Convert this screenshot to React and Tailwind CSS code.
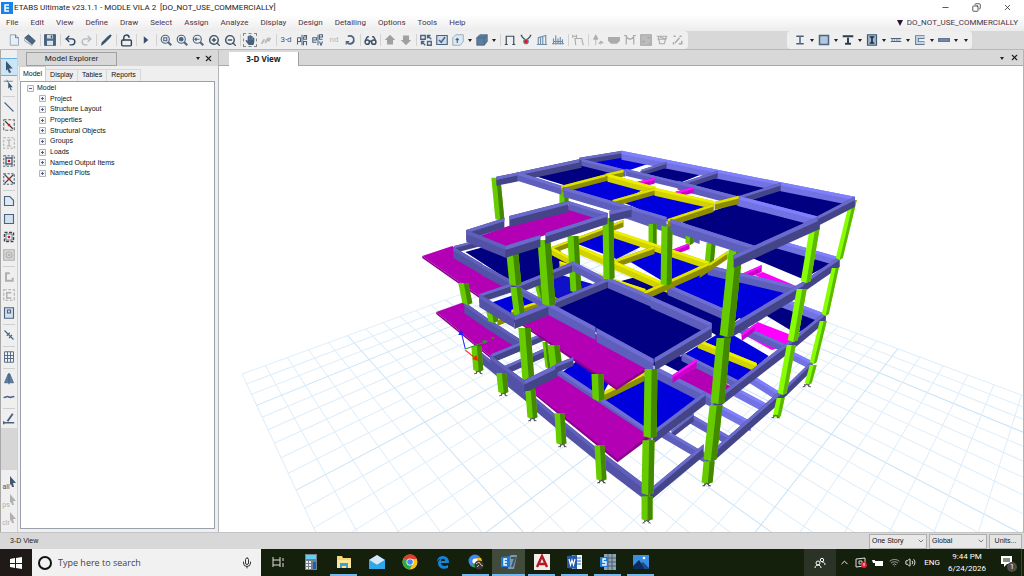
import React, { useState } from 'react'
import {
    Undo2, Redo2, LockOpen, ZoomIn, ZoomOut, Glasses,
    Minus, X, ChevronDown, ChevronUp, Mic, Wifi, Volume2, Copy
} from 'lucide-react'
import { FaHandPaper } from 'react-icons/fa'

const menus = ['File', 'Edit', 'View', 'Define', 'Draw', 'Select', 'Assign', 'Analyze', 'Display', 'Design', 'Detailing', 'Options', 'Tools', 'Help']
const treeItems = ['Project', 'Structure Layout', 'Properties', 'Structural Objects', 'Groups', 'Loads', 'Named Output Items', 'Named Plots']

/* ---------- 3-D model ---------- */

// far left corner of the base grid and its two vanishing points
const L = [243, 374]
const V1 = [90, 46]
const V2 = [1130, 50]
const COLS = 26
const ROWS = 36

function gridPoint(u, v) {
    const a = u * 0.029
    const b = v * 0.027
    const w = 1 - a + b
    return [(L[0] - a * V1[0] + b * V2[0]) / w, (L[1] - a * V1[1] + b * V2[1]) / w]
}

function gridLines() {
    const lines = []
    for (let v = 0; v <= COLS; v++) {
        lines.push([gridPoint(0, v), gridPoint(Math.min(ROWS, 30 + v), v), v % 6 === 5])
    }
    for (let u = 0; u <= ROWS; u++) {
        lines.push([gridPoint(u, u > 30 ? u - 30 : 0), gridPoint(u, COLS), u % 6 === 3])
    }
    return lines
}

// [top face, side face]
const tones = {
    B: ['#8080ff', '#7272e2'],
    D: ['#6e6ed2', '#5e5ebc'],
    E: ['#6060bc', '#5252a6'],
    R: ['#6a6acc', '#444488'],
    Y: ['#eeee00', '#d2d200'],
    Z: ['#e2e200', '#8c8c00'],
    M: ['#ff10ff', '#c800c8'],
    C: ['#66cc00', '#448800'],
    G: ['#88ff00', '#5cb800'],
}

const navy = '#000080'
const blue = '#0000dd'
const mag = '#b400b4'
const magEdge = '#8a008a'

// s = slab [s, fill, points], c = column [c, tone, x1, y1, x2, y2, width], otherwise beam [tone, x1, y1, x2, y2, depth]
const model = [
    // base level
    ['B', 780, 345, 812, 361, 9],
    ['B', 748, 372, 780, 392, 10],
    ['B', 730, 384, 768, 404, 10],
    ['B', 712, 400, 751, 421, 10],
    ['D', 690, 413, 730, 436, 10],
    ['R', 672, 430, 694, 413, 8],
    ['D', 660, 426, 706, 453, 10],
    ['R', 650, 489, 704, 444, 12],
    ['R', 706, 456, 780, 391, 12],
    ['R', 779, 393, 813, 360, 10],
    ['E', 474, 346, 500, 367, 11],
    ['R', 505, 366, 546, 348, 9],
    ['R', 492, 355, 546, 332, 8],
    ['E', 498, 366, 529, 391, 12],
    ['E', 528, 391, 558, 416, 13],
    ['E', 558, 416, 600, 450, 13],
    ['E', 600, 450, 650, 488, 15],
    // first level slabs
    ['s', mag, '437,312 465,302 520,343 492,357'],
    ['s', magEdge, '437,312 492,357 492,359 437,314'],
    ['s', blue, '482,306 520,293 548,306 512,324'],
    ['s', blue, '563,372 580,359 612,378 600,400'],
    ['s', blue, '598,402 658,370 702,396 650,434'],
    ['s', blue, '680,357 725,330 769,356 736,383'],
    ['s', mag, '670,381 697,367 734,388 716,400'],
    ['s', navy, '660,362 676,354 692,363 680,372'],
    ['s', navy, '764,314 782,301 824,316 797,334'],
    ['s', '#ff00ff', '743,334 758,322 794,336 784,347 772,350'],
    ['D', 735, 322, 788, 345, 9],
    ['B', 778, 296, 826, 314, 10],
    ['M', 742, 334, 755, 324, 7],
    ['Y', 698, 339, 757, 363, 9],
    ['D', 682, 352, 738, 380, 9],
    ['D', 657, 367, 712, 395, 12],
    ['M', 673, 375, 697, 359, 8],
    ['Z', 604, 392, 645, 372, 9],
    ['R', 714, 399, 793, 338, 12],
    ['R', 790, 341, 826, 311, 11],
    ['E', 465, 302, 492, 321, 11],
    ['E', 491, 320, 525, 342, 11],
    ['Z', 498, 318, 558, 294, 8],
    // second level slabs
    ['s', navy, '640,300 668,286 740,316 716,334'],
    ['s', navy, '664,302 685,292 742,316 718,336'],
    ['s', blue, '666,286 712,266 794,291 744,320'],
    ['s', navy, '750,257 773,245 836,261 803,279'],
    ['s', navy, '466,252 510,240 560,250 572,268 520,287'],
    ['s', blue, '573,242 607,228 647,244 617,259'],
    ['s', blue, '626,259 654,248 704,264 668,284'],
    ['s', navy, '618,282 640,276 664,288 644,298'],
    ['s', '#1010c8', '552,272 600,286 570,306 545,290'],
    ['s', '#ff00ff', '755,275 763,272 794,285 784,288'],
    ['B', 772, 238, 838, 257, 9],
    ['D', 625, 210, 700, 236, 8],
    ['M', 742, 274, 762, 265, 7],
    ['M', 672, 250, 690, 243, 6],
    ['D', 708, 265, 805, 288, 10],
    ['c', 'C', 649, 224, 649, 245, 8],
    ['c', 'C', 686, 234, 686, 243, 8],
    ['c', 'C', 707, 243, 705, 264, 9],
    ['Z', 552, 247, 624, 220, 7],
    ['Y', 608, 228, 710, 262, 8],
    ['Z', 612, 261, 655, 246, 8],
    ['Y', 576, 244, 668, 284, 9],
    ['Y', 552, 247, 580, 262, 8],
    ['Y', 560, 261, 646, 289, 7],
    ['D', 668, 284, 725, 309, 11],
    ['R', 724, 329, 806, 280, 13],
    ['R', 804, 281, 840, 256, 11],
    ['Z', 700, 270, 728, 251, 8],
    ['Z', 641, 293, 710, 262, 9],
    // left wing
    ['s', mag, '423,256 453,246 515,286 480,296'],
    ['s', magEdge, '423,256 480,296 480,298 423,258'],
    ['R', 455, 246, 490, 237, 7],
    ['c', 'C', 459, 283, 463, 303, 10],
    ['E', 454, 247, 483, 264, 11],
    ['E', 482, 264, 519, 284, 11],
    ['c', 'C', 568, 236, 571, 291, 11],
    ['c', 'C', 535, 284, 540, 302, 6],
    ['R', 518, 284, 573, 262, 10],
    ['D', 573, 261, 604, 277, 10],
    // balcony frame
    ['c', 'C', 486, 307, 489, 321, 10],
    ['s', blue, '498,305 525,292 551,303 516,318'],
    ['Z', 512, 310, 545, 299, 7],
    ['D', 520, 287, 550, 303, 8],
    ['R', 480, 294, 516, 282, 9],
    ['c', 'C', 511, 287, 515, 318, 11],
    ['E', 480, 294, 515, 315, 13],
    ['s', navy, '556,306 608,282 654,298 716,326 655,366 598,333'],
    ['D', 608, 277, 652, 296, 11],
    ['D', 651, 296, 712, 323, 12],
    ['s', mag, '522,323 549,307 652,366 617,389'],
    ['s', magEdge, '522,323 617,387 650,366 650,369 617,390 522,325'],
    ['R', 515, 316, 550, 302, 13],
    ['R', 550, 302, 608, 278, 10],
    ['D', 549, 302, 596, 327, 13],
    ['D', 597, 328, 654, 359, 14],
    ['R', 655, 358, 712, 324, 13],
    // lower balcony
    ['c', 'C', 543, 342, 546, 367, 5],
    ['c', 'C', 548, 345, 551, 368, 12],
    ['D', 556, 366, 598, 394, 12],
    ['D', 597, 394, 652, 431, 13],
    ['c', 'C', 592, 374, 593, 399, 12],
    ['s', mag, '528,387 556,374 650,436 618,461'],
    ['s', magEdge, '528,387 618,459 650,434 650,438 618,462 528,389'],
    ['R', 492, 354, 524, 341, 9],
    ['c', 'C', 519, 328, 524, 393, 12],
    ['E', 491, 355, 526, 381, 13],
    ['R', 525, 380, 558, 364, 13],
    ['R', 556, 364, 574, 357, 9],
    ['R', 653, 431, 706, 391, 13],
    // columns down to the supports
    ['c', 'C', 472, 346, 474, 370, 10],
    ['c', 'C', 497, 373, 499, 392, 10],
    ['c', 'C', 526, 391, 528, 417, 10],
    ['c', 'C', 555, 413, 557, 443, 10],
    ['c', 'C', 595, 445, 597, 479, 10],
    ['c', 'C', 645, 369, 644, 436, 13],
    ['c', 'C', 643, 440, 642, 493, 12],
    ['c', 'C', 642, 496, 642, 519, 11],
    ['c', 'G', 810, 228, 801, 281, 10],
    ['c', 'G', 797, 289, 788, 340, 10],
    ['c', 'G', 787, 345, 778, 393, 9],
    ['c', 'G', 777, 398, 773, 416, 8],
    ['c', 'G', 850, 200, 836, 258, 7],
    ['c', 'G', 832, 268, 822, 314, 7],
    ['c', 'G', 820, 321, 810, 362, 7],
    ['c', 'G', 810, 365, 805, 383, 7],
    ['c', 'C', 603, 218, 604, 278, 11],
    ['c', 'C', 662, 224, 661, 284, 11],
    ['c', 'C', 729, 250, 720, 335, 14],
    ['c', 'C', 717, 338, 711, 402, 14],
    ['c', 'C', 710, 405, 704, 459, 13],
    ['c', 'C', 704, 461, 702, 482, 11],
    // roof level
    ['c', 'C', 492, 178, 496, 219, 9],
    ['c', 'C', 560, 190, 560, 204, 9],
    ['s', navy, '528,174 583,161 616,172 570,187'],
    ['s', blue, '592,163 624,155 652,163 625,172'],
    ['s', navy, '640,172 667,164 706,173 678,184'],
    ['s', navy, '686,183 717,175 770,188 740,199'],
    ['s', navy, '746,198 777,188 848,203 817,220'],
    ['s', blue, '570,190 607,179 644,190 615,204'],
    ['s', blue, '625,203 660,192 710,206 672,223'],
    ['s', navy, '682,222 742,201 820,220 750,254'],
    ['R', 497, 177, 582, 159, 9],
    ['R', 580, 158, 623, 151, 7],
    ['B', 622, 151, 855, 197, 9],
    ['D', 582, 159, 626, 170, 7],
    ['R', 642, 170, 667, 162, 6],
    ['R', 682, 183, 718, 171, 7],
    ['D', 626, 169, 680, 182, 7],
    ['D', 678, 181, 740, 197, 9],
    ['R', 740, 196, 781, 183, 8],
    ['B', 738, 196, 820, 217, 10],
    ['M', 638, 182, 655, 178, 6],
    ['M', 676, 192, 694, 187, 6],
    ['D', 518, 172, 562, 186, 9],
    ['Z', 562, 186, 608, 174, 7],
    ['Z', 606, 174, 624, 170, 7],
    ['Y', 608, 174, 656, 187, 8],
    ['Z', 613, 200, 656, 188, 7],
    ['Y', 655, 188, 714, 201, 8],
    ['Z', 668, 219, 714, 204, 8],
    ['Z', 715, 202, 739, 196, 8],
    ['D', 564, 187, 667, 217, 10],
    ['D', 671, 219, 756, 246, 12],
    ['R', 734, 255, 820, 216, 13],
    ['R', 818, 216, 855, 197, 10],
    // terrace
    ['c', 'C', 538, 240, 543, 304, 13],
    ['c', 'C', 507, 254, 510, 284, 12],
    ['s', mag, '480,236 569,206 608,214 505,249'],
    ['R', 467, 230, 505, 218, 10],
    ['R', 510, 216, 569, 201, 11],
    ['D', 569, 201, 608, 213, 9],
    ['R', 610, 211, 632, 206, 11],
    ['E', 467, 230, 507, 246, 12],
    ['R', 506, 246, 541, 235, 12],
    ['R', 546, 233, 608, 213, 11],
]

function ModelPart({ part }) {
    if (part[0] === 's') {
        return <polygon fill={part[1]} points={part[2]} />
    }
    if (part[0] === 'c') {
        const [, tone, x1, y1, x2, y2, w] = part
        const m = w * 0.55
        return (
            <g>
                <polygon fill={tones[tone][0]} points={`${x1},${y1} ${x1 + w},${y1} ${x2 + w},${y2} ${x2 + m},${y2 + 2} ${x2},${y2}`} />
                <polygon fill={tones[tone][1]} points={`${x1 + m},${y1} ${x1 + w},${y1} ${x2 + w},${y2} ${x2 + m},${y2 + 2}`} />
            </g>
        )
    }
    const [tone, x1, y1, x2, y2, h] = part
    const t = h * 0.34
    return (
        <g>
            <polygon fill={tones[tone][1]} points={`${x1},${y1} ${x2},${y2} ${x2},${y2 + h} ${x1},${y1 + h}`} />
            <polygon fill={tones[tone][0]} points={`${x1},${y1} ${x2},${y2} ${x2},${y2 + t} ${x1},${y1 + t}`} />
        </g>
    )
}

const supports = [[479, 371], [504, 393], [533, 418], [563, 444], [602, 480], [647, 520], [707, 483], [776, 415], [807, 384]]

function ModelView() {
    return (
        <svg className="block h-full w-full" viewBox="220 66 803 466" preserveAspectRatio="xMidYMid slice" role="img" aria-label="3-D View">
            {gridLines().map(([a, b, strong], i) => (
                <line key={i} x1={a[0]} y1={a[1]} x2={b[0]} y2={b[1]} stroke={strong ? '#c8e3f8' : '#deeefb'} strokeWidth="1" />
            ))}
            {model.map((part, i) => <ModelPart key={i} part={part} />)}
            {supports.map(([x, y]) => (
                <path key={x} d={`M${x - 4} ${y + 3}l4-3 4 3M${x - 2} ${y}v3M${x + 2} ${y}v3`} stroke="#555" strokeWidth="1" fill="none" />
            ))}
            <g fill="none" strokeWidth="1">
                <path d="M466 349l-4-17" stroke="#2020ff" />
                <path d="M462 329l-3 6h5z" fill="#2020ff" />
                <path d="M466 349l20-7" stroke="#20a020" />
                <path d="M489 341l-6-1 2 4z" fill="#20a020" />
                <path d="M466 350l10 8" stroke="#ff2000" />
                <path d="M479 361l-6-2 4-4z" fill="#ff2000" />
                <path d="M492 337l3 2m-3 0l3-2" stroke="#448800" />
            </g>
        </svg>
    )
}

/* ---------- small pieces ---------- */

function Ico({ children, color = '#4a6380', label }) {
    return (
        <button type="button" aria-label={label} className="flex h-4 w-4 shrink-0 items-center justify-center" style={{ color }}>
            <svg viewBox="0 0 16 16" className="h-3 w-3" fill="none" stroke="currentColor" strokeWidth="1.5">{children}</svg>
        </button>
    )
}

function LucideBtn({ icon: Icon, color = '#3d5064', label }) {
    return (
        <button type="button" aria-label={label} className="flex h-4 w-4 shrink-0 items-center justify-center" style={{ color }}>
            <Icon size={13} strokeWidth={2.6} />
        </button>
    )
}

function TextBtn({ children, faded }) {
    return (
        <button type="button" className={`h-4 w-4 shrink-0 text-center text-[8px] leading-4 ${faded ? 'text-[#b5b5b5]' : 'text-[#3f5873]'}`}>{children}</button>
    )
}

function Sep() {
    return <span className="flex h-3 w-1 shrink-0 justify-center"><span className="w-px bg-[#d2d2d2]" /></span>
}

function HSep() {
    return <span className="flex h-1 w-3 shrink-0 flex-col justify-center"><span className="h-px bg-[#cfcfcf]" /></span>
}

function Drop({ label }) {
    return (
        <button type="button" aria-label={label} className="flex h-4 w-2 shrink-0 items-center justify-center">
            <svg viewBox="0 0 6 6" className="h-[6px] w-[6px]"><path d="M1 2h4l-2 3z" fill="#222" /></svg>
        </button>
    )
}

const lens = <path d="M11 11l4 4" strokeWidth="2.6" />

function MainToolbar() {
    return (
        <div className="flex items-center rounded-r bg-[#efefef] pl-[6px]">
            <Ico label="New model"><path d="M3 1h7l4 4v10H3z" fill="#e6eef6" stroke="#7c92a8" strokeWidth="1" /><path d="M10 1v4h4" strokeWidth="1" /></Ico>
            <Ico label="Open"><path d="M1 5l5-4 9 8-4 5z" fill="#4c6680" stroke="#344b62" strokeWidth="1" /><path d="M1 5v4l9 6 1-1" stroke="#9fb2c4" /></Ico>
            <Sep />
            <Ico label="Save"><path d="M1 1h14v14H1z" fill="#4d6984" stroke="#39526b" /><path d="M4 1h8v5H4z" fill="#cfdae4" stroke="none" /><path d="M9 2h2v3H9z" fill="#39526b" stroke="none" /><path d="M4 9h8v6H4z" fill="#dbe4ec" stroke="none" /></Ico>
            <Sep />
            <LucideBtn icon={Undo2} label="Undo" color="#2b4766" />
            <LucideBtn icon={Redo2} label="Redo" color="#b4bac0" />
            <Sep />
            <Ico label="Edit"><path d="M2 15l1-4 8-8 3-2 1 1-2 3-7 7z" fill="#34506d" stroke="#34506d" strokeWidth="1" /></Ico>
            <Sep />
            <LucideBtn icon={LockOpen} label="Unlock model" color="#2c4258" />
            <Sep />
            <Ico label="Run analysis"><path d="M5 3l6 5-6 5z" fill="#34506d" stroke="none" /></Ico>
            <Sep />
            <Ico label="Rubber band zoom"><circle cx="7" cy="7" r="5.4" />{lens}<path d="M5 5h4v4H5z" /></Ico>
            <Ico label="Zoom all"><circle cx="7" cy="7" r="5.4" />{lens}<circle cx="7" cy="7" r="2.4" fill="currentColor" /></Ico>
            <Ico label="Previous zoom"><circle cx="7" cy="7" r="5.4" />{lens}<path d="M10 7H4l2-2M4 7l2 2" /></Ico>
            <LucideBtn icon={ZoomIn} label="Zoom in" />
            <LucideBtn icon={ZoomOut} label="Zoom out" />
            <Sep />
            <button type="button" aria-label="Pan" className="flex h-4 w-4 shrink-0 items-center justify-center text-[#46617d]">
                <span className="flex h-[14px] w-[14px] items-center justify-center border border-dashed border-[#888]"><FaHandPaper size={10} /></span>
            </button>
            <Ico label="Walk" color="#b8b8b8"><path d="M2 13l4-6M7 12l4-7M11 10l3-5" strokeWidth="2.4" /></Ico>
            <Sep />
            <TextBtn>3-d</TextBtn>
            <Ico label="Plan view"><path d="M2 5v9M2 5h4v5H2M8 1v14M10 2h4v5h-4V4h4M10 9v6M10 10h4v5" strokeWidth="1.4" /></Ico>
            <Ico label="Elevation view"><path d="M1 8h5V5H1v6h5M8 1v14M10 4h4V1h-4v6h4M10 10l2 5 2-5" strokeWidth="1.4" /></Ico>
            <TextBtn faded>nd</TextBtn>
            <Ico label="Rotate view"><path d="M5 3c6-2 9 2 8 6-1 5-7 5-9 2" strokeWidth="2.4" /><path d="M3 14v-4h4" /></Ico>
            <Sep />
            <LucideBtn icon={Glasses} label="Perspective" />
            <Sep />
            <Ico label="Move up" color="#a0a0a0"><path d="M8 1l7 7h-3v6H4V8H1z" fill="currentColor" stroke="none" /></Ico>
            <Ico label="Move down" color="#a0a0a0"><path d="M8 15l7-7h-3V2H4v6H1z" fill="currentColor" stroke="none" /></Ico>
            <Sep />
            <Ico label="Object shrink"><path d="M1 2h6v5H1zM10 10h5v5h-5zM10 2l5 5M10 6V2h4M2 10l5 5M2 14v-4h4" strokeWidth="1.8" /></Ico>
            <Ico label="Display options"><path d="M1 2h14v12H1z" fill="#cfdeee" /><path d="M4 8l3 3 5-7" strokeWidth="2" /></Ico>
            <Ico label="Assign display"><path d="M1 5l4-4h10v9l-4 5H1z" fill="#dde8f2" strokeWidth="1" stroke="#8299b0" /><path d="M7 6v6M5 8l2-2 2 2" /></Ico>
            <Drop label="Assign display list" />
            <Ico label="Render"><path d="M1 5l4-4h10v9l-4 5H1z" fill="#5b7da0" strokeWidth="1" /><path d="M11 15V5H1M11 5l4-4" strokeWidth="1" /></Ico>
            <Drop label="Render list" />
            <Sep />
            <Ico label="Undeformed shape" color="#3d4c5c"><path d="M3 14V3h10v11M1 14h4M11 14h4" strokeWidth="1.6" /></Ico>
            <Ico label="Joint loads" color="#3d4c5c"><path d="M2 3l6 6 6-6" /><circle cx="8" cy="10" r="3" fill="#e01818" stroke="#5b7da0" /><path d="M1 2h2M13 2h2" strokeWidth="2" /></Ico>
            <Ico label="Frame loads" color="#6d8cab"><path d="M1 14h14M3 14V5l10-3v12M6 14V4M9 14V3" /></Ico>
            <Ico label="Shell loads" color="#6d8cab"><path d="M0 13h16M2 13V6M5 14V2M8 13V6M11 14V4M14 13V7M2 10h12" /></Ico>
            <Sep />
            <Ico label="Deformed shape" color="#ababab"><path d="M5 15L4 6h9l2 9M1 1v4M6 1v4M1 3h5" /></Ico>
            <Sep />
            <Ico label="Reactions" color="#ababab"><path d="M5 1l3 6H2zM5 6v9M9 12h6l-3-3M9 12l3 2" fill="currentColor" strokeWidth="1" /></Ico>
            <Ico label="Soil pressure" color="#ababab"><path d="M0 4h16v5l-4 4H4L0 9z" fill="currentColor" stroke="none" /></Ico>
            <Ico label="Forces" color="#ababab"><path d="M3 14V3c2 5 8 5 10 0v11M0 2h4M12 2h4" strokeWidth="1.6" /></Ico>
            <Ico label="Stresses" color="#a5a5a5"><path d="M1 1h14v14H1z" fill="#bcbcbc" /><path d="M4 11l2-2M10 5h3M12 12l1 1" strokeWidth="2" /></Ico>
            <Ico label="Energy" color="#ababab"><path d="M1 3h14M2 7h12l-9-3M3 3l2 10h6l3-10" /></Ico>
            <Ico label="Drifts" color="#ababab"><path d="M4 12l6-7M2 3h3M9 13h5M2 11v3M13 9v5M10 3h3" strokeWidth="2" /></Ico>
            <span className="w-[2px]" />
        </div>
    )
}

function SectionToolbar() {
    return (
        <div className="mr-[52px] flex items-center rounded bg-[#efefef] pl-[5px]">
            <Ico label="Steel beam"><path d="M3 3h10M8 3v10M3 13h10" strokeWidth="2" /></Ico>
            <Drop label="Steel beam list" />
            <Ico label="Concrete column"><path d="M2 2h12v12H2z" fill="#b5c9de" strokeWidth="2" /></Ico>
            <Drop label="Concrete column list" />
            <Ico label="Composite beam" color="#2d3c4a"><path d="M1 3h14M8 5v8M4 13h8" strokeWidth="2.6" /></Ico>
            <Drop label="Composite beam list" />
            <Ico label="Composite column" color="#22303e"><path d="M2 1h12v14H2z" fill="#9db3c9" stroke="#3f5873" /><path d="M5 4h6M8 4v8M5 12h6" strokeWidth="2.2" /></Ico>
            <Drop label="Composite column list" />
            <Ico label="Steel joist"><path d="M1 6h14M1 10h14" /><path d="M2 8h12" strokeDasharray="2 1" /></Ico>
            <Drop label="Steel joist list" />
            <Ico label="Shear wall" color="#5f7690"><path d="M14 4H4v8h10" strokeWidth="5" /><path d="M14 4H4v8h10" stroke="#c5d5e5" strokeWidth="2.4" /></Ico>
            <Drop label="Shear wall list" />
            <Ico label="Slab"><path d="M0 6h16v4H0z" fill="#6f879f" strokeWidth="1" /></Ico>
            <Drop label="Slab list" />
            <span className="w-[2px]" />
            <Drop label="More" />
            <span className="w-[2px]" />
        </div>
    )
}

function VIco({ children, label, color }) {
    return <span className="flex h-[18px] items-center"><Ico label={label} color={color}>{children}</Ico></span>
}

function SideTools() {
    return (
        <div className="flex w-[17px] shrink-0 flex-col items-center justify-between border-l border-[#a8a8a8] bg-[#d6d6d6]">
            <div className="flex w-full flex-col items-center bg-[#efefef] pt-2">
                <span className="flex w-full justify-center border-y border-[#66b2e6] bg-[#cbe5f8]">
                    <Ico label="Select object"><path d="M4 0l9 10-5 0 3 5-3 1-2-5-2 2z" fill="#3a5673" stroke="none" /></Ico>
                </span>
                <VIco label="Reshape object"><path d="M1 3h12M5 1l2 4" strokeWidth="1" /><path d="M7 4l6 7-3 0 2 4-2 0-1-4-2 2z" fill="#3a5673" stroke="none" /></VIco>
                <HSep />
                <VIco label="Draw line"><path d="M2 2l12 12" /></VIco>
                <VIco label="Quick draw line"><path d="M1 1h14v14H1z" strokeDasharray="4 2" stroke="#666" /><path d="M3 3l10 10" stroke="#333" /><circle cx="8" cy="8" r="1.8" fill="#e01818" stroke="none" /></VIco>
                <VIco label="Quick draw columns" color="#b0b0b0"><path d="M1 1h14v14H1z" strokeDasharray="3 2" /><path d="M5 4h6M8 4v8M5 12h6" /></VIco>
                <VIco label="Quick draw secondary beams"><path d="M1 1h14v14H1z" strokeDasharray="3 2" stroke="#666" /><path d="M4 2v12M12 2v12M4 4h8M4 12h8" strokeWidth="1.8" /><circle cx="8" cy="8" r="1.8" fill="#e01818" stroke="none" /></VIco>
                <VIco label="Quick draw braces"><path d="M1 1h14v14H1z" strokeDasharray="3 2" /><path d="M2 2l12 12M14 2L2 14" stroke="#444" /><circle cx="8" cy="8" r="1.8" fill="#e01818" stroke="none" /></VIco>
                <HSep />
                <VIco label="Draw floor"><path d="M2 2h7l5 5v7H2z" fill="#dfe9f2" /></VIco>
                <VIco label="Draw rectangular floor"><path d="M2 2h12v12H2z" fill="#d3e1ee" /></VIco>
                <VIco label="Quick draw floor"><path d="M2 2h12v12H2z" strokeDasharray="4 2" stroke="#444" strokeWidth="2" /><path d="M4 4h8v8H4z" fill="#eef3f8" strokeWidth="1" /><circle cx="8" cy="8" r="1.8" fill="#e01818" stroke="none" /></VIco>
                <VIco label="Quick draw area" color="#b0b0b0"><path d="M1 1h14v14H1z" fill="#d9d9d9" /><circle cx="8" cy="8" r="4" /><circle cx="8" cy="8" r="1" /></VIco>
                <HSep />
                <VIco label="Draw walls" color="#b0b0b0"><path d="M9 3H4v10h9V9" strokeWidth="2.6" /></VIco>
                <VIco label="Quick draw walls" color="#b0b0b0"><path d="M1 1h14v14H1z" strokeDasharray="4 2" /><path d="M11 5H5v7h6" strokeWidth="2" /></VIco>
                <VIco label="Draw wall openings"><path d="M2 1h12v14H2z" fill="#d3e1ee" /><path d="M6 4h4v4H6z" /></VIco>
                <HSep />
                <VIco label="Draw links"><path d="M2 2l12 12M5 9l4-4M8 12l4-4" /></VIco>
                <HSep />
                <VIco label="Draw grids"><path d="M2 1h12v14H2zM2 6h12M2 10h12M6 1v14M10 1v14" strokeWidth="1.2" /></VIco>
                <HSep />
                <VIco label="Draw section cuts"><path d="M7 1h2l5 12H2z" fill="#5b7da0" strokeWidth="1" /><path d="M8 1v14" /></VIco>
                <VIco label="Draw tendons"><path d="M1 8c2 2 3-2 7 0s4-2 7 0" strokeWidth="2" /></VIco>
                <HSep />
                <VIco label="Draw dimension"><path d="M1 13h14M1 11v4" strokeWidth="2" /><path d="M6 11l7-10" strokeWidth="2.6" /></VIco>
            </div>
            <div className="flex w-full flex-col items-center bg-[#efefef] pb-1 pt-1">
                {['all', 'ps', 'clr'].map((t, i) => (
                    <button key={t} type="button" className={`flex h-[18px] items-end text-[7px] leading-[10px] ${i === 0 ? 'text-[#3f5873]' : 'text-[#b0b0b0]'}`}>
                        <span>{t}</span>
                        <svg viewBox="0 0 6 12" className="mb-1 h-3 w-[6px]" fill="currentColor"><path d="M0 0l6 7-3 0 1 4-2 0-1-3-1 1z" /></svg>
                    </button>
                ))}
            </div>
        </div>
    )
}

function Explorer() {
    const [tab, setTab] = useState('Model')
    return (
        <aside className="flex w-[201px] shrink-0 flex-col border-l border-[#d0d0d0] bg-[#efefef]">
            <div className="flex h-4 items-center bg-[#d8d8d8] pl-2">
                <h2 className="mt-[2px] h-[14px] w-[91px] border border-[#a0a0a0] text-center text-[8px] leading-3 text-[#222]">Model Explorer</h2>
                <span className="flex-1" />
                <Drop label="Explorer options" />
                <button type="button" aria-label="Close explorer" className="ml-[2px] mr-[5px] text-[#222]"><X size={9} strokeWidth={3} /></button>
            </div>
            <div className="flex h-[15px] items-end pl-px font-['Liberation_Sans',sans-serif] text-[7px] text-[#111]">
                {['Model', 'Display', 'Tables', 'Reports'].map((t) => (
                    <button
                        key={t}
                        type="button"
                        onClick={() => setTab(t)}
                        className={tab === t ? 'h-[15px] border-x border-t border-[#d0d0d0] bg-white px-[3px]' : 'h-3 border-r border-t border-[#d8d8d8] px-1'}
                    >{t}</button>
                ))}
            </div>
            <div className="mb-[3px] ml-[2px] mr-[3px] flex-1 border border-[#9aa0ac] bg-white pl-[6px] pt-px">
                <ul className="grid h-24 grid-rows-9 font-['Liberation_Sans',sans-serif] text-[7px] text-[#111]">
                    <li className="flex items-center gap-[3px]">
                        <Toggle open />
                        Model
                    </li>
                    {treeItems.map((t) => (
                        <li key={t} className="flex items-center gap-1 pl-3">
                            <Toggle />
                            {t}
                        </li>
                    ))}
                </ul>
            </div>
        </aside>
    )
}

function Toggle({ open }) {
    return (
        <svg viewBox="0 0 7 7" className="h-[7px] w-[7px] shrink-0" fill="none">
            <path d="M.5.5h6v6h-6z" fill="#f4f4f4" stroke="#b5b5b5" />
            <path d={open ? 'M2 3.5h3' : 'M2 3.5h3M3.5 2v3'} stroke="#4a6390" />
        </svg>
    )
}

function StatusSelect({ label, value }) {
    return (
        <div className="relative flex h-[15px] w-[58px] items-center border border-[#adadad] bg-[#e8e8e8]">
            <select aria-label={label} defaultValue={value} className="w-full appearance-none pl-[2px] font-['Liberation_Sans',sans-serif] text-[7px] text-[#111] outline-none">
                <option>{value}</option>
            </select>
            <ChevronDown size={8} className="pointer-events-none absolute right-px top-[2px] text-[#444]" />
        </div>
    )
}

/* ---------- taskbar ---------- */

function TaskButton({ label, running, active, children }) {
    return (
        <button type="button" aria-label={label} className={`flex h-full w-[33px] shrink-0 flex-col items-center ${active ? 'bg-[#404b3b]' : ''}`}>
            <span className="flex flex-1 items-center">
                <svg viewBox="0 0 16 16" className="h-4 w-4" fill="none">{children}</svg>
            </span>
            <span className={`h-[2px] ${active ? 'w-full' : 'w-[27px]'} ${running ? 'bg-[#76b9ed]' : ''}`} />
        </button>
    )
}

function Taskbar() {
    return (
        <footer className="flex h-[27px] shrink-0 items-stretch bg-[#141f0c] text-white">
            <button type="button" aria-label="Start" className="flex w-8 shrink-0 items-center justify-center bg-[#1f1a18]">
                <svg viewBox="0 0 12 12" className="h-3 w-3" fill="#fff"><path d="M0 2l5-1v5H0zM6 1l6-1v6H6zM0 7h5v4l-5-1zM6 7h6v5l-6-1z" /></svg>
            </button>
            <label className="flex w-[229px] shrink-0 items-center gap-[6px] bg-[#f1f1f1] px-[6px]">
                <span className="h-[14px] w-[14px] shrink-0 rounded-full border-2 border-[#111]" />
                <input type="text" aria-label="Search" placeholder="Type here to search" className="min-w-0 flex-1 font-['Open_Sans',sans-serif] text-[9px] text-[#333] outline-none placeholder:text-[#444]" />
                <Mic size={12} className="mr-[2px] text-[#333]" />
            </label>
            <TaskButton label="Task View"><path d="M3 3v10M10 3v10M3 6h7M3 11h7M13 4v3M13 9v4" stroke="#ddd" /></TaskButton>
            <TaskButton label="Calculator"><path d="M2 0h12v16H2z" fill="#76818c" /><path d="M3 1h10v4H3z" fill="#5fd0f5" /><path d="M3 7h2v2H3zM6 7h2v2H6zM3 10h2v2H3zM6 10h2v2H6zM3 13h2v2H3zM6 13h2v2H6z" fill="#e8edf2" /><path d="M10 8h3v7h-3z" fill="#1266b0" /></TaskButton>
            <TaskButton label="File Explorer" running><path d="M1 2h5l1 2h8v10H1z" fill="#f8d775" /><path d="M1 6h14v8H1z" fill="#fbe69a" /><path d="M4 9h8v5h-2v-2H6v2H4z" fill="#3fa0d8" /></TaskButton>
            <TaskButton label="Mail"><path d="M0 6l8-5 8 5v9H0z" fill="#1273c8" /><path d="M0 6l8-5 8 5-8 5z" fill="#d5e9f8" /><path d="M0 6l8 5 8-5v9H0z" fill="#2fa8ea" /></TaskButton>
            <TaskButton label="Chrome">
                <circle cx="8" cy="8" r="7.5" fill="#fbc116" />
                <path d="M8 8L1.5 4.3A7.5 7.5 0 0 1 14.9 5H8z" fill="#e33b2e" />
                <path d="M8 8L1.5 4.3A7.5 7.5 0 0 0 7.5 15.5L11 10z" fill="#2da94f" />
                <circle cx="8" cy="8" r="3.6" fill="#fff" /><circle cx="8" cy="8" r="2.8" fill="#4285f4" />
            </TaskButton>
            <TaskButton label="Edge"><path d="M2 8c0-4 3-6 6-6 4 0 6 3 6 7H6c0 3 4 4 7 2v3c-5 2-10 0-10-5 0-2 1-3 3-4-2 0-3 1-4 3zM6 7h4c0-3-4-3-4 0z" fill="#1583d8" /></TaskButton>
            <TaskButton label="Chrome profile" running>
                <circle cx="7" cy="7" r="6.5" fill="#4285f4" /><path d="M2 11a6.5 6.5 0 0 0 5 2l2-4z" fill="#2da94f" />
                <path d="M8 4h5l1 3H9z" fill="#fbc116" /><circle cx="7" cy="7" r="2.6" fill="#fff" />
                <circle cx="11" cy="11" r="4.5" fill="#3b3632" /><path d="M8 10l3-2 2 3 2 1M9 13l2-2" stroke="#c9c2ba" />
            </TaskButton>
            <TaskButton label="ETABS" running active><path d="M8 3l2-2h6l-3 14H7z" fill="#7e98ac" /><path d="M10 4h4l-3 9" stroke="#3e566b" strokeWidth="2" /><path d="M0 3l9-1v11H0z" fill="#1c7bd8" /><path d="M6 5H3v6h3M3 8h3" stroke="#fff" strokeWidth="1.3" /></TaskButton>
            <TaskButton label="AutoCAD" running><path d="M0 0h16v16H0z" fill="#f4ece9" /><path d="M3 13L8 2l5 11M5 10h7" stroke="#b31b24" strokeWidth="2.4" /></TaskButton>
            <TaskButton label="Word" running><path d="M5 1h10v14H5z" fill="#f4f8fd" /><path d="M10 4h4M10 7h4M10 10h4" stroke="#2b65b8" /><path d="M0 2l10-1v14L0 14z" fill="#2458a8" /><path d="M2 5l1.5 6L5 6l1.5 5L8 5" stroke="#fff" strokeWidth="1.2" /></TaskButton>
            <TaskButton label="SAFE" running><path d="M4 0h12v16H4z" fill="#8fa3b3" /><path d="M8 0v16M12 0v16M4 4h12M4 8h12M4 12h12" stroke="#4a6073" /><path d="M0 3h8v10H0z" fill="#1c7bd8" /><path d="M6 5H3v3h3v3H2" stroke="#fff" strokeWidth="1.3" /></TaskButton>
            <TaskButton label="Photos" running><path d="M0 1h16v14H0z" fill="#3a8ee0" /><path d="M0 15V12l6-6 6 9z" fill="#0b2c5c" /><path d="M8 9l2-1 6 6v1h-4z" fill="#1a4c8c" /><circle cx="11" cy="4" r="1.3" fill="#fff" /></TaskButton>
            <span className="flex-1" />
            <button type="button" aria-label="People" className="flex w-8 items-center justify-center bg-[#2a3326]">
                <svg viewBox="0 0 12 12" className="h-3 w-3" fill="none" stroke="#fff"><circle cx="4" cy="6" r="2" /><path d="M1 11c0-4 6-4 6 0" /><circle cx="8" cy="3" r="1.7" /><path d="M8 5c2 0 3 1 3 3" /></svg>
            </button>
            <div className="flex items-center gap-[5px] pl-[3px]">
                <ChevronUp size={11} />
                <svg viewBox="0 0 12 12" className="h-3 w-3" fill="none"><path d="M1 2l9-1v8l-9 1z" stroke="#ddd" /><path d="M4 4h3v3H4z" stroke="#ddd" /><circle cx="9" cy="8" r="3" fill="#e02030" /><path d="M9 6v3" stroke="#fff" /></svg>
                <svg viewBox="0 0 12 12" className="h-3 w-3" fill="#fff"><path d="M3 4h8v5H3zM0 3h3v3H1z" /></svg>
                <Wifi size={11} className="text-[#aaa]" />
                <Volume2 size={11} />
                <span className="ml-[3px] text-[8px]">ENG</span>
            </div>
            <div className="w-[54px] text-center text-[8px] leading-3">
                <div className="pt-[2px]">9:44 PM</div>
                <div>6/24/2026</div>
            </div>
            <button type="button" aria-label="Notifications" className="relative flex w-[27px] items-center justify-center">
                <svg viewBox="0 0 16 16" className="h-4 w-4"><path d="M1 1h11v8H7l-3 3V9H1z" fill="#fff" /><path d="M3 4h7M3 6h7" stroke="#141f0c" /></svg>
                <span className="absolute bottom-1 right-1 flex h-[10px] w-[10px] items-center justify-center rounded-full bg-[#4c4c4c] text-[7px] leading-none">1</span>
            </button>
            <span className="mr-[2px] w-px bg-[#3c4638]" />
        </footer>
    )
}

function App() {
    return (
        <div className="flex h-screen w-full flex-col overflow-hidden bg-[#d8d8d8] font-['Roboto',sans-serif] text-[8px] text-[#222]">
            <header className="flex h-[15px] shrink-0 items-center bg-white">
                <svg viewBox="0 0 12 12" className="ml-px h-3 w-3"><path d="M0 0h12v12H0z" fill="#1683ee" /><path d="M8 3H4v6h4M4 6h4" stroke="#fff" strokeWidth="1.5" fill="none" /></svg>
                <h1 className="ml-px whitespace-pre text-[8px]">ETABS Ultimate v23.1.1 - MODLE VILA 2  [DO_NOT_USE_COMMERCIALLY]</h1>
                <span className="flex-1" />
                <div className="mr-3 flex items-center gap-[22px]">
                    <button type="button" aria-label="Minimize"><Minus size={9} strokeWidth={2} /></button>
                    <button type="button" aria-label="Restore"><Copy size={9} strokeWidth={2} className="-scale-x-100" /></button>
                    <button type="button" aria-label="Close"><X size={9} strokeWidth={2} /></button>
                </div>
            </header>
            <nav className="flex h-4 shrink-0 items-center gap-3 bg-gradient-to-b from-white to-[#ececec] pl-[6px] pr-[6px] text-[#4c3448]">
                {menus.map((m) => <button key={m} type="button">{m}</button>)}
                <span className="flex-1" />
                <button type="button" className="flex items-center gap-1">
                    <svg viewBox="0 0 6 6" className="h-[6px] w-[6px]"><path d="M0 0h6L3 6z" fill="#2d1430" /></svg>
                    DO_NOT_USE_COMMERCIALLY
                </button>
            </nav>
            <div className="flex h-[19px] shrink-0 justify-between border-b border-[#b8b8b8]">
                <MainToolbar />
                <SectionToolbar />
            </div>
            <main className="flex min-h-0 flex-1">
                <SideTools />
                <Explorer />
                <section className="flex min-w-0 flex-1 flex-col border-x border-[#b4b4b4] bg-white">
                    <div className="flex h-4 shrink-0 items-stretch border-b border-[#a8a8a8] bg-[#d8d8d8] pl-[10px]">
                        <h2 className="-mb-px mt-[2px] w-[70px] border-r border-[#a0a0a0] bg-white text-center font-['Open_Sans',sans-serif] text-[8px] font-bold leading-[13px]">3-D View</h2>
                        <span className="flex-1" />
                        <Drop label="View options" />
                        <button type="button" aria-label="Close view" className="ml-1 mr-1"><X size={9} strokeWidth={3} /></button>
                    </div>
                    <div className="min-h-0 flex-1">
                        <ModelView />
                    </div>
                </section>
            </main>
            <div className="flex h-[17px] shrink-0 items-center gap-[2px] border-t border-[#c4c4c4] pl-[10px] pr-[2px] font-['Liberation_Sans',sans-serif] text-[7px]">
                <span>3-D View</span>
                <span className="flex-1" />
                <StatusSelect label="Story" value="One Story" />
                <StatusSelect label="Coordinate system" value="Global" />
                <button type="button" className="h-[15px] w-[33px] border border-[#adadad] bg-[#e4e4e4]">Units...</button>
            </div>
            <Taskbar />
        </div>
    )
}

export default App
